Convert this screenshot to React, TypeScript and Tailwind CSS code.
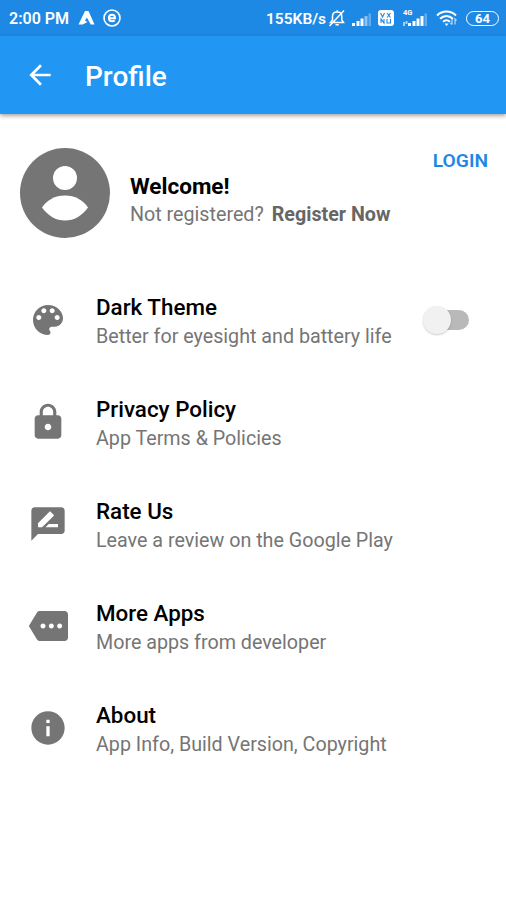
import type { ReactNode } from "react";

interface Item {
  title: string;
  subtitle: string;
  icon: ReactNode;
  toggle?: boolean;
}

const ITEMS: Item[] = [
  {
    title: "Dark Theme",
    subtitle: "Better for eyesight and battery life",
    icon: (
      <path d="M12 3c-4.97 0-9 4.03-9 9s4.03 9 9 9c.83 0 1.5-.67 1.5-1.5 0-.39-.15-.74-.39-1.01-.23-.26-.38-.61-.38-.99 0-.83.67-1.5 1.5-1.5H16c2.76 0 5-2.24 5-5 0-4.42-4.03-8-9-8zm-5.5 9c-.83 0-1.5-.67-1.5-1.5S5.67 9 6.5 9 8 9.67 8 10.5 7.33 12 6.5 12zm3-4C8.67 8 8 7.33 8 6.5S8.67 5 9.5 5s1.5.67 1.5 1.5S10.33 8 9.5 8zm5 0c-.83 0-1.5-.67-1.5-1.5S13.67 5 14.5 5s1.5.67 1.5 1.5S15.33 8 14.5 8zm3 4c-.83 0-1.5-.67-1.5-1.5S16.67 9 17.5 9s1.5.67 1.5 1.5-.67 1.5-1.5 1.5z" />
    ),
    toggle: true,
  },
  {
    title: "Privacy Policy",
    subtitle: "App Terms & Policies",
    icon: (
      <path d="M18 8h-1V6c0-2.76-2.24-5-5-5S7 3.24 7 6v2H6c-1.1 0-2 .9-2 2v10c0 1.1.9 2 2 2h12c1.1 0 2-.9 2-2V10c0-1.1-.9-2-2-2zm-6 9c-1.1 0-2-.9-2-2s.9-2 2-2 2 .9 2 2-.9 2-2 2zm3.1-9H8.9V6c0-1.71 1.39-3.1 3.1-3.1s3.1 1.39 3.1 3.1v2z" />
    ),
  },
  {
    title: "Rate Us",
    subtitle: "Leave a review on the Google Play",
    icon: (
      <path d="M20 2H4c-1.1 0-1.99.9-1.99 2L2 22l4-4h14c1.1 0 2-.9 2-2V4c0-1.1-.9-2-2-2zM6 14v-2.47l6.88-6.88c.2-.2.51-.2.71 0l1.77 1.77c.2.2.2.51 0 .71L8.47 14H6zm12 0h-7.5l2-2H18v2z" />
    ),
  },
  {
    title: "More Apps",
    subtitle: "More apps from developer",
    icon: (
      <path d="M22 3H7c-.69 0-1.23.35-1.59.88L.5 12l4.91 8.11c.36.53.97.89 1.66.89H22c1.1 0 2-.9 2-2V5c0-1.1-.9-2-2-2zM9 13.5c-.83 0-1.5-.67-1.5-1.5s.67-1.5 1.5-1.5 1.5.67 1.5 1.5-.67 1.5-1.5 1.5zm5 0c-.83 0-1.5-.67-1.5-1.5s.67-1.5 1.5-1.5 1.5.67 1.5 1.5-.67 1.5-1.5 1.5zm5 0c-.83 0-1.5-.67-1.5-1.5s.67-1.5 1.5-1.5 1.5.67 1.5 1.5-.67 1.5-1.5 1.5z" />
    ),
  },
  {
    title: "About",
    subtitle: "App Info, Build Version, Copyright",
    icon: (
      <path d="M12 2C6.48 2 2 6.48 2 12s4.48 10 10 10 10-4.48 10-10S17.52 2 12 2zm1 15h-2v-6h2v6zm0-8h-2V7h2v2z" />
    ),
  },
];

function SignalBars({ network = false }: { network?: boolean }) {
  return (
    <svg width={network ? 26 : 20} height="20" viewBox={network ? "-6 0 26 20" : "0 0 20 20"} fill="#fff">
      {network && (
        <>
          <text x="-5" y="6" fontSize="7.5" fontWeight="700" fontFamily="Roboto, sans-serif">
            4G
          </text>
          <path d="M-5 13h2v4h-2zM-2.5 12h2v3h-2z" opacity="0.6" />
        </>
      )}
      <path d="M0 14h3v3H0zM4.5 12h3v5h-3zM8.5 9.5h3V17h-3z" />
      <path d="M12.5 7h3v10h-3z" opacity={network ? 1 : 0.5} />
      <path d="M16.5 4.5H19V17h-2.5z" opacity="0.3" />
    </svg>
  );
}

function StatusBar() {
  return (
    <div className="flex h-9 items-center justify-between bg-[#1e88e5] pl-[9px] pr-[7px] text-white">
      <div className="flex items-center">
        <span className="w-[61px] whitespace-nowrap pt-[2px] text-[16px] font-semibold leading-[34px]">2:00 PM</span>
        <svg className="ml-2" width="17" height="14" viewBox="0 0 17 14" fill="#fff">
          <path d="M7 0h3.5l6 13.5h-3.8L8.9 6.4 7 9.7l2.6 1.3-5 2.5H.5z" />
        </svg>
        <svg className="ml-2" width="18" height="18" viewBox="0 0 18 18" fill="none" stroke="#fff">
          <circle cx="9" cy="9" r="8" strokeWidth="1.6" />
          <path d="M6 9.2h6c0-2.2-1.2-3.4-3-3.4S5.9 7.2 5.9 9.1s1.2 3.2 3.2 3.2c1.1 0 2-.4 2.6-1" strokeWidth="2" />
        </svg>
      </div>
      <div className="flex items-center">
        <span className="w-[62px] whitespace-nowrap pt-[2px] text-[15.5px] font-semibold leading-[34px]">155KB/s</span>
        <svg width="18" height="18" viewBox="0 0 18 18" fill="none" stroke="#fff" strokeWidth="1.5">
          <path d="M2.5 13.5h13L13.8 11V7.2C13.8 4.6 11.8 3 9.2 3S4.5 4.600 4.5 7.2V11zM7.5 15.8h3.3M9.2 1.2V3M1.5 17 16 1.5" />
        </svg>
        <span className="ml-[6px] flex pt-[2px]">
          <SignalBars />
        </span>
        <svg className="ml-[6px]" width="16" height="16" viewBox="0 0 16 16">
          <rect width="16" height="16" rx="3" fill="#fff" />
          <path d="M2.5 3l2 4 2-4M9 7.5l1.8-2M9 3l3.5 4.5M12.5 3l-1.7 2.5M3 13V9l3 4V9M9 9v4h3.500V9" stroke="#1e88e5" strokeWidth="1.1" fill="none" />
        </svg>
        <span className="ml-2 flex pt-[2px]">
          <SignalBars network />
        </span>
        <svg className="ml-[8px]" width="22" height="18" viewBox="0 0 22 18" fill="none" stroke="#fff" strokeWidth="2">
          <path d="M1 6.5c5.5-5.2 13.5-5.2 19 0M4 9.8c4-3.6 9-3.6 13 0M7 12.8c2.3-2 4.7-2 7 0" />
          <path d="M8.6 14.5h4L10.5 17z" fill="#fff" stroke="none" />
          <path d="M16 10v5.5M14.5 14l1.5 1.5M19 15.5V10l1.5 1.5" strokeWidth="1.2" opacity="0.7" />
        </svg>
        <div className="ml-[8px] flex h-[15px] w-[33px] items-center justify-center rounded-full border-[1.5px] border-white text-[13px] font-bold leading-none">
          64
        </div>
      </div>
    </div>
  );
}

function AppBar() {
  return (
    <header className="relative flex h-[78px] items-center bg-[#2196f3] pl-[24px] text-white shadow-[0_2px_4px_rgba(0,0,0,0.35)]">
      <svg width="32" height="32" viewBox="0 0 24 24" fill="#fff">
        <path d="M20 11H7.83l5.59-5.59L12 4l-8 8 8 8 1.41-1.41L7.83 13H20v-2z" />
      </svg>
      <h1 className="ml-[29px] pt-[4px] text-[28px] font-medium leading-8">Profile</h1>
    </header>
  );
}

function Account() {
  return (
    <section className="flex h-[124px] pl-5 pr-[18px] pt-[34px]">
      <svg className="shrink-0" width="90" height="90" viewBox="0 0 90 90">
        <circle cx="45" cy="45" r="45" fill="#757575" />
        <circle cx="45" cy="30" r="12" fill="#fff" />
        <path d="M22 59.5C27 52 35 47.500 45 47.500S63 52 68 59.500C62 68 54 72.500 45 72.500S28 68 22 59.500z" fill="#fff" />
      </svg>
      <div className="ml-5 pt-[24px]">
        <div className="text-[22.5px] font-bold leading-7 text-black">Welcome!</div>
        <div className="mt-px flex whitespace-nowrap text-[19.7px] leading-7 text-[#757575]">
          <span>Not registered?</span>
          <span className="ml-2 font-bold text-[#666]">Register Now</span>
        </div>
      </div>
      <button className="ml-auto h-[25px] pt-px text-[19.2px] font-semibold leading-6 text-[#1e88e5]">LOGIN</button>
    </section>
  );
}

function Toggle() {
  return (
    <div className="relative mr-[37px] h-[20px] w-[38px] rounded-full bg-[#b9b9b9]">
      <div className="absolute -left-[8px] -top-[4px] size-[28px] rounded-full bg-[#f1f1f1] shadow-[0_1px_2px_rgba(0,0,0,0.2)]" />
    </div>
  );
}

function SettingRow({ item }: { item: Item }) {
  return (
    <li className="flex h-[102px] items-center pl-7">
      <svg className="shrink-0" width="40" height="40" viewBox="0 0 24 24" fill="#757575">
        {item.icon}
      </svg>
      <div className="ml-7 flex-1 whitespace-nowrap pt-[4px]">
        <div className="text-[22.4px] font-medium leading-7 text-black">{item.title}</div>
        <div className="mt-[2px] text-[19.7px] leading-7 text-[#757575]">{item.subtitle}</div>
      </div>
      {item.toggle && <Toggle />}
    </li>
  );
}

export default function App() {
  return (
    <div className="h-[900px] w-[506px] overflow-hidden bg-white font-[Roboto,sans-serif]">
      <StatusBar />
      <AppBar />
      <Account />
      <ul className="pt-[31px]">
        {ITEMS.map((item) => (
          <SettingRow key={item.title} item={item} />
        ))}
      </ul>
    </div>
  );
}
